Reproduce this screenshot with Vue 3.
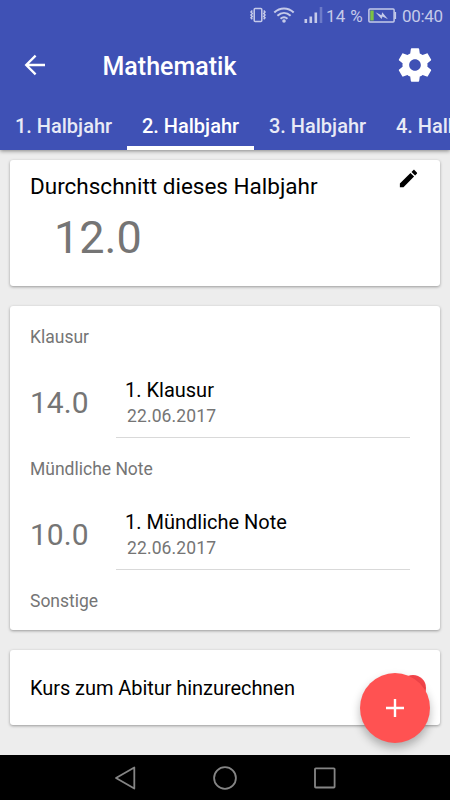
<template>
  <div class="screen">
    <header class="app-bar">
      <div class="status-bar">
        <svg class="status-vibrate" viewBox="0 0 18 16">
          <rect x="5.2" y="1.4" width="7.6" height="13.2" rx="1" />
          <path d="M3.3 3.5L2 4.9l1.3 1.5L2 7.9l1.3 1.5L2 10.8l1.3 1.4M14.7 3.5L16 4.9l-1.3 1.5L16 7.9l-1.3 1.5 1.3 1.4-1.3 1.4" />
        </svg>
        <svg class="status-wifi" viewBox="0 0 22 16">
          <path d="M1.3 5.4C7 .1 15 .1 20.7 5.4M4.4 8.7c4-3.6 9.2-3.6 13.2 0M7.5 11.7c2.2-1.8 4.8-1.8 7 0" />
          <circle cx="11" cy="14" r="1.8" />
        </svg>
        <svg class="status-signal" viewBox="0 0 19 16">
          <path d="M1.8 12v4M6.8 9.5V16M11.8 5.5V16" />
          <path class="weak" d="M17 0v16" />
        </svg>
        <span class="percent">14 %</span>
        <svg class="status-battery" viewBox="0 0 29 15">
          <rect x=".9" y="1" width="25.2" height="13" rx="1" />
          <path class="level" d="M2.3 2.5h3.4v10H2.3z" />
          <path class="cap" d="M26.5 4h1.6v7h-1.6z" />
          <path class="cap" d="M7.5 4.2l6 3.1.7-3 5.8 7-5.5-2.7-.9 2.3z" />
        </svg>
        <span class="clock">00:40</span>
      </div>

      <div class="toolbar">
        <svg class="back" viewBox="0 0 30 30">
          <path d="M25 15H6.5M15.6 5.6L6.2 15l9.4 9.4" />
        </svg>
        <h1>{{ subject }}</h1>
        <svg class="settings" viewBox="0 0 24 24">
          <path d="M19.43 12.98c.04-.32.07-.64.07-.98s-.03-.66-.07-.98l2.11-1.65c.19-.15.24-.42.12-.64l-2-3.46c-.12-.22-.39-.3-.61-.22l-2.49 1c-.52-.4-1.08-.73-1.69-.98l-.38-2.65C14.46 2.18 14.25 2 14 2h-4c-.25 0-.46.18-.49.42l-.38 2.65c-.61.25-1.17.59-1.69.98l-2.49-1c-.23-.09-.49 0-.61.22l-2 3.46c-.13.22-.07.49.12.64l2.11 1.65c-.04.32-.07.65-.07.98s.03.66.07.98l-2.11 1.65c-.19.15-.24.42-.12.64l2 3.46c.12.22.39.3.61.22l2.49-1c.52.4 1.08.73 1.69.98l.38 2.65c.03.24.24.42.49.42h4c.25 0 .46-.18.49-.42l.38-2.65c.61-.25 1.17-.59 1.69-.98l2.49 1c.23.09.49 0 .61-.22l2-3.46c.12-.22.07-.49-.12-.64l-2.11-1.65zM12 15.5c-1.93 0-3.5-1.57-3.5-3.5s1.57-3.5 3.5-3.5 3.5 1.57 3.5 3.5-1.57 3.5-3.5 3.5z" />
        </svg>
      </div>

      <nav class="tabs">
        <button
          v-for="n in 4"
          :key="n"
          class="tab"
          :class="{ active: n === activeTab }"
          @click="activeTab = n"
        >
          {{ n }}. Halbjahr
        </button>
      </nav>
    </header>

    <main class="content">
      <section class="card average">
        <div class="average-head">
          <h2>Durchschnitt dieses Halbjahr</h2>
          <svg class="edit" viewBox="0 0 24 24">
            <path d="M3 17.25V21h3.75L17.81 9.94l-3.75-3.75L3 17.25zM20.71 7.04c.39-.39.39-1.02 0-1.41l-2.34-2.34c-.39-.39-1.02-.39-1.41 0l-1.83 1.83 3.75 3.75 1.83-1.83z" />
          </svg>
        </div>
        <div class="average-value">12.0</div>
      </section>

      <section class="card grades">
        <div v-for="group in groups" :key="group.title" class="group">
          <h3>{{ group.title }}</h3>
          <div v-for="grade in group.grades" :key="grade.name" class="grade">
            <span class="points">{{ grade.points }}</span>
            <div class="details">
              <div class="name">{{ grade.name }}</div>
              <div class="date">{{ grade.date }}</div>
            </div>
          </div>
        </div>
      </section>

      <section class="card include">
        <span>Kurs zum Abitur hinzurechnen</span>
        <span class="switch-thumb"></span>
      </section>

      <button class="fab" aria-label="Note hinzufügen">
        <svg viewBox="0 0 30 30">
          <path d="M15 6v18M6 15h18" />
        </svg>
      </button>
    </main>

    <footer class="nav-bar">
      <svg viewBox="0 0 24 24"><path d="M21.3 1.5v21L3 12z" /></svg>
      <svg viewBox="0 0 24 24"><circle cx="12" cy="12" r="10.9" /></svg>
      <svg viewBox="0 0 24 24"><rect x="2" y="2.3" width="19.6" height="19.2" rx=".8" /></svg>
    </footer>
  </div>
</template>

<script setup>
import { ref } from 'vue';

const subject = 'Mathematik';
const activeTab = ref(2);

const groups = ref([
  {
    title: 'Klausur',
    grades: [{ name: '1. Klausur', points: '14.0', date: '22.06.2017' }]
  },
  {
    title: 'Mündliche Note',
    grades: [{ name: '1. Mündliche Note', points: '10.0', date: '22.06.2017' }]
  },
  { title: 'Sonstige', grades: [] }
]);
</script>

<style>
body {
  margin: 0;
  overflow: hidden;
}
</style>

<style scoped>
.screen {
  display: flex;
  flex-direction: column;
  width: 450px;
  height: 800px;
  overflow: hidden;
  background: #ededed;
  font-family: Roboto, sans-serif;
  color: #000;
}

h1,
h2,
h3 {
  margin: 0;
  font-weight: 400;
}

button {
  border: 0;
  padding: 0;
  font-family: inherit;
}

svg {
  display: block;
  flex: none;
}

.app-bar {
  position: relative;
  z-index: 1;
  height: 150px;
  background: #3f51b5;
  color: #fff;
  box-shadow: 0 1px 4px rgba(0, 0, 0, 0.45);
}

/* Status bar */
.status-bar {
  display: flex;
  align-items: center;
  height: 30px;
  padding: 0 0 0 249px;
  box-sizing: border-box;
  color: #c5cae9;
  font-size: 17px;
  line-height: 30px;
  white-space: nowrap;
}

.status-bar svg {
  fill: none;
  stroke: #c5cae9;
}

.status-vibrate {
  width: 18px;
  height: 16px;
  stroke-width: 1.5;
}

.status-wifi {
  width: 22px;
  height: 16px;
  margin-left: 6px;
  stroke-width: 2;
}

.status-wifi circle {
  fill: #c5cae9;
  stroke: none;
}

.status-signal {
  width: 19px;
  height: 16px;
  margin-left: 9px;
  stroke-width: 2.6;
}

.status-signal .weak {
  stroke: #6d7bc8;
}

.percent {
  width: 38px;
  margin: 1px 0 0 3px;
  letter-spacing: 0.3px;
}

.status-battery {
  width: 29px;
  height: 15px;
  margin-left: 4px;
  stroke-width: 1.5;
}

.status-battery .level {
  fill: #7cc142;
  stroke: none;
}

.status-battery .cap {
  fill: #c5cae9;
  stroke: none;
}

.clock {
  margin: 1px 0 0 5px;
  letter-spacing: -0.3px;
}

/* Toolbar */
.toolbar {
  display: flex;
  align-items: center;
  height: 70px;
  padding: 0 15px 0 20px;
}

.back {
  width: 30px;
  height: 30px;
  fill: none;
  stroke: #fff;
  stroke-width: 2.3;
}

.toolbar h1 {
  flex: 1;
  margin: 3px 0 0 52.5px;
  font-size: 25px;
  font-weight: 500;
  line-height: 31px;
}

.settings {
  width: 40px;
  height: 40px;
  fill: #fff;
}

.tabs {
  display: flex;
  height: 50px;
  overflow: hidden;
}

.tab {
  flex: none;
  width: 127px;
  height: 50px;
  border-top: 5px solid transparent;
  border-bottom: 4px solid transparent;
  background: none;
  color: #e8eaf6;
  font-size: 20px;
  font-weight: 500;
  white-space: nowrap;
}

.tab.active {
  border-bottom-color: #fff;
  color: #fff;
}

/* Cards */
.content {
  position: relative;
  display: flex;
  flex-direction: column;
  gap: 20px;
  height: 605px;
  padding: 10px 10px 0;
  box-sizing: border-box;
}

.card {
  box-sizing: border-box;
  border-radius: 3px;
  background: #fff;
  box-shadow: 0 1px 3px rgba(0, 0, 0, 0.36);
}

.average {
  height: 126px;
  padding: 7px 20px 0;
}

.average-head {
  display: flex;
  justify-content: space-between;
}

.average-head h2 {
  margin-top: 4px;
  font-size: 22.5px;
  line-height: 30px;
}

.edit {
  width: 23px;
  height: 23px;
}

.average-value {
  margin: 10px 0 0 24px;
  color: #757575;
  font-size: 45px;
  line-height: 54px;
}

.grades {
  height: 324px;
  padding: 20px 30px 0 20px;
}

.group h3 {
  color: #757575;
  font-size: 17.5px;
  line-height: 22px;
}

.grade {
  display: flex;
  height: 110px;
}

.points {
  width: 86px;
  padding-top: 37px;
  color: #757575;
  font-size: 30px;
  line-height: 36px;
}

.details {
  flex: 1;
  height: 90px;
  padding: 29px 0 0 9px;
  box-sizing: border-box;
  border-bottom: 1px solid #d9d9d9;
}

.name {
  font-size: 20px;
  line-height: 26px;
}

.date {
  padding-left: 2px;
  color: #757575;
  font-size: 17.5px;
  line-height: 26px;
  letter-spacing: 0.12px;
}

.include {
  display: flex;
  justify-content: space-between;
  align-items: center;
  height: 75px;
  padding: 0 14px 0 20px;
  font-size: 20px;
  letter-spacing: -0.06px;
}

.switch-thumb {
  width: 26px;
  height: 26px;
  border-radius: 50%;
  background: #f5444a;
}

.fab {
  position: absolute;
  right: 20px;
  bottom: 12px;
  display: flex;
  justify-content: center;
  align-items: center;
  width: 70px;
  height: 70px;
  border-radius: 50%;
  background: #ff5252;
  box-shadow: 0 5px 10px rgba(0, 0, 0, 0.28);
}

.fab svg {
  width: 30px;
  height: 30px;
  margin-bottom: 1px;
  fill: none;
  stroke: #fff;
  stroke-width: 2.4;
}

/* Android navigation */
.nav-bar {
  display: flex;
  justify-content: center;
  align-items: center;
  gap: 76px;
  height: 45px;
  background: #000;
}

.nav-bar svg {
  width: 24px;
  height: 24px;
  fill: none;
  stroke: #858585;
  stroke-width: 1.8;
  stroke-linejoin: round;
}
</style>
